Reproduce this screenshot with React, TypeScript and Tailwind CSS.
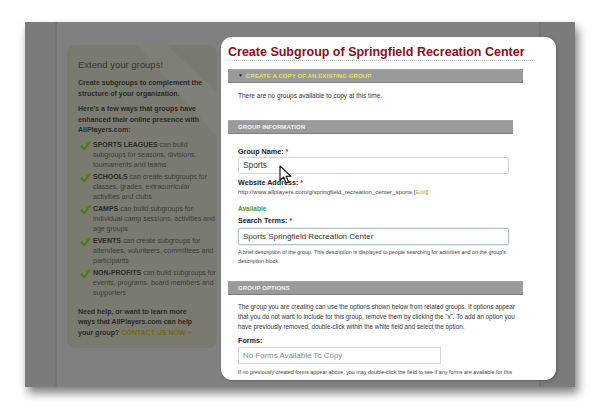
import React from "react";

const font = { fontFamily: '"Liberation Sans", Arial, sans-serif' };

function Check() {
  return (
    <svg width="11" height="10" viewBox="0 0 11 10" className="shrink-0 mt-[1px]">
      <path d="M0 5.6 L2 3.9 L4 6.2 L9.4 0 L11 1.4 L4.1 9.6 Z" fill="#4f7c12" />
    </svg>
  );
}

function Item({ head, lines }: { head: string; lines: string[] }) {
  return (
    <div className="flex gap-[2px] pl-[2px]">
      <Check />
      <div className="text-[7px] leading-[10px] text-[#3b3b36] whitespace-nowrap">
        <span className="font-bold text-[#2a2a26]">{head}</span>
        {lines[0]}
        <br />
        {lines[1]}
        <br />
        {lines[2]}
      </div>
    </div>
  );
}

function Bar({ children, w, yellow }: { children: React.ReactNode; w: string; yellow?: boolean }) {
  return (
    <div
      className={`${w} h-[14px] bg-[#9a9a9a] border-t border-t-[#a6a6a6] border-b border-b-[#7e7e7e] flex items-center pl-[10px] text-[6px] font-bold tracking-[0.1px] ${
        yellow ? "text-[#e2e26a]" : "text-[#f4f4f4]"
      }`}
    >
      {children}
    </div>
  );
}

function Label({ children }: { children: React.ReactNode }) {
  return (
    <div className="text-[7.2px] leading-[9px] font-bold text-[#222]">
      {children} <span className="text-[#b3141f]">*</span>
    </div>
  );
}

export default function App() {
  return (
    <div className="w-[600px] h-[420px] bg-white overflow-hidden pt-[22px] pl-[25px]" style={font}>
      <div className="relative w-[550px] h-[365px] bg-[#808080] flex shadow-[3px_6px_9px_rgba(0,0,0,0.5)]">
        <div className="w-[32px] h-full bg-[#7b7b7b] border-r-2 border-r-[#747474]" />
        <div className="flex-1 pl-[10px] pt-[23px]">
          <div className="relative w-[150px] h-[303px] rounded-[8px] bg-[#7b7a71] pl-[11px] pt-[14px] overflow-hidden">
            <svg className="absolute left-0 top-0" width="150" height="140">
              <polygon points="70,0 100,0 150,48 150,92" fill="rgba(255,255,255,0.045)" />
            </svg>
            <div className="relative">
              <div className="text-[9.5px] leading-[12px] text-[#36362e] whitespace-nowrap">Extend your groups!</div>
              <div className="mt-[7px] text-[7px] leading-[10.5px] font-bold text-[#2a2a26] whitespace-nowrap">
                Create subgroups to complement the
                <br />
                structure of your organization.
              </div>
              <div className="mt-[5px] text-[7px] leading-[10.5px] font-bold text-[#2a2a26] whitespace-nowrap">
                Here's a few ways that groups have
                <br />
                enhanced their online presence with
                <br />
                AllPlayers.com:
              </div>
              <div className="mt-[4.5px] flex flex-col gap-[2px]">
                <Item head="SPORTS LEAGUES" lines={[" can build", "subgroups for seasons, divisions,", "tournaments and teams"]} />
                <Item head="SCHOOLS" lines={[" can create subgroups for", "classes, grades, extracurricular", "activities and clubs"]} />
                <Item head="CAMPS" lines={[" can build subgroups for", "individual camp sessions, activities and", "age groups"]} />
                <Item head="EVENTS" lines={[" can create subgroups for", "attendees, volunteers, committees and", "participants"]} />
                <Item head="NON-PROFITS" lines={[" can build subgroups for", "events, programs, board members and", "supporters"]} />
              </div>
              <div className="mt-[8.5px] text-[7px] leading-[10.5px] font-bold text-[#2a2a26] whitespace-nowrap">
                Need help, or want to learn more
                <br />
                ways that AllPlayers.com can help
                <br />
                your group? <span className="text-[#6e6c0e]">CONTACT US NOW »</span>
              </div>
            </div>
          </div>
        </div>
        <div className="w-[36px] h-full bg-[#7b7b7b] border-l-2 border-l-[#747474]" />

        {/* modal dialog */}
        <div className="absolute left-[196px] top-[15px] w-[335px] h-[343px] rounded-[11px] bg-white overflow-hidden pl-[7px] pt-[8px] shadow-[1px_1px_3px_rgba(0,0,0,0.25)]">
          <div className="w-[305px] pb-[1px] border-b border-dotted border-[#c4c4c4]">
            <div className="text-[12.5px] leading-[14px] font-bold text-[#8c0e1b] whitespace-nowrap">
              Create Subgroup of Springfield Recreation Center
            </div>
          </div>
          <div className="mt-[8px]">
            <Bar w="w-[295px]" yellow>
              <span className="text-[5px] text-[#222] mr-[3px]">▼</span>CREATE A COPY OF AN EXISTING GROUP
            </Bar>
          </div>
          <div className="pl-[10px]">
            <div className="mt-[8px] text-[6.5px] leading-[9px] text-[#333]">There are no groups available to copy at this time.</div>
          </div>
          <div className="mt-[20px]">
            <Bar w="w-[285px]">GROUP INFORMATION</Bar>
          </div>
          <div className="pl-[10px]">
            <div className="mt-[13px]">
              <Label>Group Name:</Label>
            </div>
            <div className="mt-[1px] w-[271px] h-[17px] border border-[#d6d6d6] rounded-[2px] flex items-center pl-[4px] text-[8.3px] text-[#333]">
              Sports
            </div>
            <div className="mt-[4px]">
              <Label>Website Address:</Label>
            </div>
            <div className="mt-[1px] text-[6.1px] leading-[8px] text-[#444] whitespace-nowrap">
              http://www.allplayers.com/g/springfield_recreation_center_sports [<span className="text-[#b5b51c]">Edit</span>]
            </div>
            <div className="mt-[8px] text-[6.5px] leading-[9px] font-bold text-[#4e9a2c]">Available</div>
            <div className="mt-[3px]">
              <Label>Search Terms:</Label>
            </div>
            <div className="mt-[3px] w-[271px] h-[17px] border border-[#a9c3d2] rounded-[2px] shadow-[0_0_2px_rgba(120,160,190,0.6)] flex items-center pl-[4px] text-[8px] text-[#333] whitespace-nowrap">
              Sports Springfield Recreation Center
            </div>
            <div className="mt-[3px] text-[5.4px] leading-[9px] text-[#444] whitespace-nowrap">
              A brief description of the group. This description is displayed to people searching for activities and on the group's
              <br />
              description block.
            </div>
          </div>
          <div className="mt-[15px]">
            <Bar w="w-[295px]">GROUP OPTIONS</Bar>
          </div>
          <div className="pl-[10px]">
            <div className="mt-[7px] text-[6.3px] leading-[10px] text-[#333] whitespace-nowrap">
              The group you are creating can use the options shown below from related groups. If options appear
              <br />
              that you do not want to include for this group, remove them by clicking the "x". To add an option you
              <br />
              have previously removed, double-click within the white field and select the option.
            </div>
            <div className="mt-[4px] text-[7.2px] leading-[9px] font-bold text-[#222]">Forms:</div>
            <div className="mt-[2px] w-[203px] h-[17px] border border-[#d6d6d6] flex items-center pl-[4px] text-[7.9px] text-[#8a8a8a] whitespace-nowrap">
              No Forms Available To Copy
            </div>
            <div className="mt-[4px] text-[5.4px] leading-[9px] text-[#444] whitespace-nowrap">
              If no previously created forms appear above, you may double-click the field to see if any forms are available for this
              <br />
              group.
            </div>
          </div>
        </div>

        {/* mouse cursor */}
        <svg className="absolute left-[254px] top-[143px]" width="14" height="20" viewBox="0 0 14 20">
          <path d="M1 1 L1 15.5 L4.6 12.2 L7.2 18 L9.6 17 L7.1 11.3 L12 11.3 Z" fill="#fff" stroke="#000" strokeWidth="1.1" strokeLinejoin="round" />
        </svg>
      </div>
    </div>
  );
}
